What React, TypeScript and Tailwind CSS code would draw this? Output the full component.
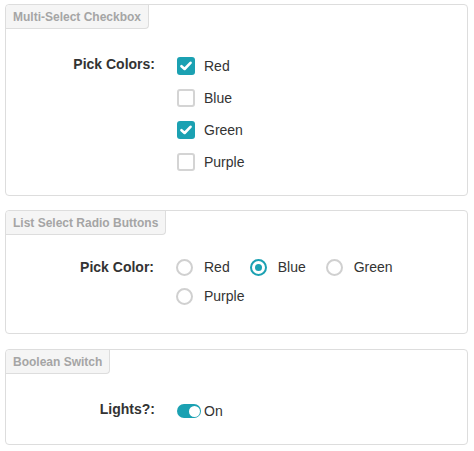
import { useState } from 'react'

function Panel({ title, children, className }: { title: string; children: React.ReactNode; className: string }) {
  return (
    <div className={`border border-[#dddddd] rounded-[4px] bg-white ${className}`}>
      <div className="inline-flex items-center h-[24px] px-[7px] bg-[#f5f5f5] border-r border-b border-[#dddddd] rounded-br-[4px] rounded-tl-[4px] text-[12px] font-bold text-[#a5a5a5]">
        {title}
      </div>
      {children}
    </div>
  )
}

function Check({ on }: { on: boolean }) {
  return on ? (
    <span className="w-[18px] h-[18px] rounded-[3px] bg-[#1ba1b2] flex items-center justify-center">
      <svg width="12" height="10" viewBox="0 0 12 10" fill="none">
        <path d="M1.5 5.2 L4.6 8 L10.5 1.8" stroke="white" strokeWidth="2.6" strokeLinecap="round" strokeLinejoin="round" />
      </svg>
    </span>
  ) : (
    <span className="w-[18px] h-[18px] rounded-[3px] border-2 border-[#d4d4d4] bg-white" />
  )
}

function Radio({ on }: { on: boolean }) {
  return on ? (
    <span className="w-[17px] h-[17px] rounded-full border-2 border-[#1ba1b2] flex items-center justify-center">
      <span className="w-[7px] h-[7px] rounded-full bg-[#1ba1b2]" />
    </span>
  ) : (
    <span className="w-[17px] h-[17px] rounded-full border-2 border-[#d0d0d0] bg-white" />
  )
}

export default function App() {
  const [colors, setColors] = useState<string[]>(['Red', 'Green'])
  const [color, setColor] = useState('Blue')
  const [lights, setLights] = useState(true)

  const toggle = (c: string) =>
    setColors(colors.includes(c) ? colors.filter((x) => x !== c) : [...colors, c])

  return (
    <div className="w-[474px] h-[451px] bg-white pt-[4px] pl-[5px] text-[#333333] text-[14px] font-['Liberation_Sans',Arial,sans-serif]">
      <div className="w-[463px] flex flex-col">
        {/* Multi-select */}
        <Panel title="Multi-Select Checkbox" className="h-[192px]">
          <div className="grid grid-cols-[149px_1fr] gap-x-[22px] pt-[21px]">
            <div className="text-right font-bold pt-[4px]">Pick Colors:</div>
            <div className="flex flex-col">
              {['Red', 'Blue', 'Green', 'Purple'].map((c) => (
                <label key={c} className="h-[32px] flex items-center gap-[9px] cursor-pointer" onClick={() => toggle(c)}>
                  <Check on={colors.includes(c)} />
                  <span>{c}</span>
                </label>
              ))}
            </div>
          </div>
        </Panel>

        {/* Radio */}
        <Panel title="List Select Radio Buttons" className="h-[124px] mt-[14px]">
          <div className="grid grid-cols-[148px_1fr] gap-x-[22px] pt-[18px]">
            <div className="h-[29px] flex items-center justify-end font-bold">Pick Color:</div>
            <div className="flex flex-wrap w-[240px]">
              {['Red', 'Blue', 'Green', 'Purple'].map((c) => (
                <label key={c} className="h-[29px] flex items-center gap-[11px] mr-[20px] cursor-pointer" onClick={() => setColor(c)}>
                  <Radio on={color === c} />
                  <span>{c}</span>
                </label>
              ))}
            </div>
          </div>
        </Panel>

        {/* Switch */}
        <Panel title="Boolean Switch" className="h-[96px] mt-[15px]">
          <div className="grid grid-cols-[149px_1fr] gap-x-[22px] pt-[23px]">
            <div className="h-[28px] flex items-center justify-end font-bold pb-[4px]">Lights?:</div>
            <label className="h-[28px] flex items-center gap-[3px] cursor-pointer" onClick={() => setLights(!lights)}>
              <span className={`w-[24px] h-[14px] rounded-full flex items-center px-[1.5px] ${lights ? 'bg-[#1ba1b2] justify-end' : 'bg-[#cccccc] justify-start'}`}>
                <span className="w-[11px] h-[11px] rounded-full bg-white" />
              </span>
              <span>{lights ? 'On' : 'Off'}</span>
            </label>
          </div>
        </Panel>
      </div>
    </div>
  )
}
